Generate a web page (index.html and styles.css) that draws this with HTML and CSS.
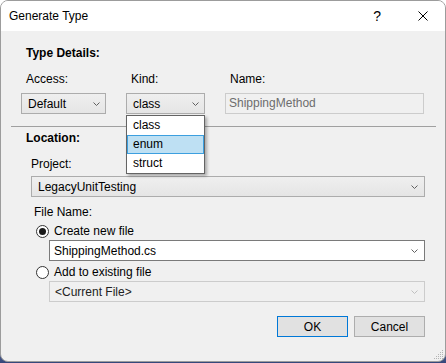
FILE: index.html
```html
<!DOCTYPE html>
<html lang="en">
<head>
    <meta charset="UTF-8">
    <title>Generate Type</title>
    <link rel="stylesheet" href="styles.css">
</head>
<body>
    <div class="window">
        <div class="titlebar">
            <span class="title">Generate Type</span>
            <span class="help">?</span>
            <svg class="close" width="10" height="10" viewBox="0 0 10 10">
                <path d="M0.5 0.5 L9.5 9.5 M9.5 0.5 L0.5 9.5" stroke="#000" stroke-width="1" fill="none"/>
            </svg>
        </div>

        <div class="content">
            <div class="group-title">Type Details:</div>
            <div class="fields">
                <div class="field">
                    <div class="label">Access:</div>
                    <div class="combo">
                        <span>Default</span>
                        <svg class="chev" width="7" height="4" viewBox="0 0 7 4"><path d="M0.5 0.5 L3.5 3.5 L6.5 0.5" stroke="#606060" fill="none"/></svg>
                    </div>
                </div>
                <div class="field kind">
                    <div class="label">Kind:</div>
                    <div class="combo">
                        <span>class</span>
                        <svg class="chev" width="7" height="4" viewBox="0 0 7 4"><path d="M0.5 0.5 L3.5 3.5 L6.5 0.5" stroke="#606060" fill="none"/></svg>
                    </div>
                    <ul class="dropdown">
                        <li>class</li>
                        <li class="selected">enum</li>
                        <li>struct</li>
                    </ul>
                </div>
                <div class="field">
                    <div class="label">Name:</div>
                    <div class="textbox">ShippingMethod</div>
                </div>
            </div>

            <div class="separator"></div>

            <div class="group-title">Location:</div>
            <div class="location">
                <div class="label plain">Project:</div>
                <div class="combo wide">
                    <span>LegacyUnitTesting</span>
                    <svg class="chev" width="7" height="4" viewBox="0 0 7 4"><path d="M0.5 0.5 L3.5 3.5 L6.5 0.5" stroke="#606060" fill="none"/></svg>
                </div>

                <div class="label file-label">File Name:</div>
                <div class="radio-row">
                    <span class="radio checked"></span>
                    <span>Create new file</span>
                </div>
                <div class="combo edit">
                    <span>ShippingMethod.cs</span>
                    <svg class="chev" width="7" height="4" viewBox="0 0 7 4"><path d="M0.5 0.5 L3.5 3.5 L6.5 0.5" stroke="#606060" fill="none"/></svg>
                </div>
                <div class="radio-row second">
                    <span class="radio"></span>
                    <span>Add to existing file</span>
                </div>
                <div class="combo edit disabled">
                    <span>&lt;Current File&gt;</span>
                    <svg class="chev" width="7" height="4" viewBox="0 0 7 4"><path d="M0.5 0.5 L3.5 3.5 L6.5 0.5" stroke="#c0c0c0" fill="none"/></svg>
                </div>
            </div>

            <div class="buttons">
                <button class="btn default">OK</button>
                <button class="btn">Cancel</button>
            </div>
        </div>

        <svg class="grip" width="11" height="11" viewBox="0 0 11 11">
            <g fill="#b4b4b4">
                <rect x="9" y="1" width="1" height="1"/>
                <rect x="7" y="3" width="1" height="1"/><rect x="9" y="3" width="1" height="1"/>
                <rect x="5" y="5" width="1" height="1"/><rect x="7" y="5" width="1" height="1"/><rect x="9" y="5" width="1" height="1"/>
                <rect x="3" y="7" width="1" height="1"/><rect x="5" y="7" width="1" height="1"/><rect x="7" y="7" width="1" height="1"/><rect x="9" y="7" width="1" height="1"/>
                <rect x="1" y="9" width="1" height="1"/><rect x="3" y="9" width="1" height="1"/><rect x="5" y="9" width="1" height="1"/><rect x="7" y="9" width="1" height="1"/><rect x="9" y="9" width="1" height="1"/>
            </g>
        </svg>
    </div>
</body>
</html>
```

FILE: styles.css
```css
body {
    margin: 0;
    font-family: "Liberation Sans", Arial, sans-serif;
    font-size: 12px;
    color: #000;
    background: linear-gradient(#ffffff 0, #ffffff 300px, #34467a 363px);
    height: 363px;
    overflow: hidden;
}
.window {
    position: relative;
    width: 444px;
    height: 360px;
    border: 1px solid #9c9c9c;
    border-radius: 8px;
    background: #f0f0f0;
    overflow: hidden;
}
.titlebar {
    height: 30px;
    background: #fff;
    display: flex;
    align-items: center;
}
.title {
    margin-left: 8px;
    line-height: 16px;
}
.help {
    margin-left: auto;
    margin-right: 37px;
    font-size: 14px;
}
.close {
    margin-right: 17px;
}
.content {
    padding: 14px 20px 0 20px;
}
.group-title {
    font-weight: bold;
    line-height: 16px;
    margin: 0 0 10px 5px;
}
.fields {
    display: grid;
    grid-template-columns: 85px 79px 199px;
    column-gap: 20px;
}
.field {
    position: relative;
}
.label {
    line-height: 16px;
    margin: 0 0 6px 5px;
}
.combo {
    box-sizing: border-box;
    height: 21px;
    border: 1px solid #acacac;
    background: linear-gradient(#efefef, #e5e5e5);
    display: flex;
    align-items: center;
    padding: 0 5px 0 6px;
}
.combo span {
    flex: 1;
    line-height: 16px;
}
.chev {
    display: block;
}
.textbox {
    box-sizing: border-box;
    height: 21px;
    border: 1px solid #cccccc;
    background: #f0f0f0;
    color: #6d6d6d;
    padding: 0 3px;
    line-height: 19px;
}
.dropdown {
    position: absolute;
    top: 44px;
    left: 0;
    width: 79px;
    box-sizing: border-box;
    margin: 0;
    padding: 0;
    list-style: none;
    background: #fff;
    border: 1px solid #646464;
    box-shadow: 2px 2px 3px rgba(0, 0, 0, 0.3);
    z-index: 2;
}
.dropdown li {
    height: 19px;
    line-height: 19px;
    padding-left: 6px;
}
.dropdown li.selected {
    background: #bee0f3;
    outline: 1px solid #3c9fdf;
    outline-offset: -1px;
}
.separator {
    height: 1px;
    background: #a0a0a0;
    margin: 12px -11px 3px -10px;
}
.location {
    padding-left: 10px;
}
.label.plain {
    margin: 0 0 4px 0;
}
.combo.wide {
    padding-left: 6px;
    padding-right: 6px;
}
.label.file-label {
    margin: 7px 0 3px 3px;
}
.radio-row {
    display: flex;
    align-items: center;
    line-height: 16px;
    margin-left: 5px;
    margin-bottom: 1px;
}
.radio-row.second {
    margin-top: 3px;
}
.radio {
    box-sizing: border-box;
    width: 13px;
    height: 13px;
    border: 1px solid #333;
    border-radius: 50%;
    background: #fff;
    margin-right: 5px;
    display: flex;
    align-items: center;
    justify-content: center;
}
.radio.checked::after {
    content: "";
    width: 7px;
    height: 7px;
    border-radius: 50%;
    background: #1a1a1a;
}
.combo.edit {
    margin-left: 18px;
    background: #fff;
    border-color: #7a7a7a;
    padding-left: 4px;
    padding-right: 6px;
}
.combo.edit.disabled {
    background: #f0f0f0;
    border-color: #cccccc;
    padding-left: 5px;
    color: #222;
}
.buttons {
    display: flex;
    justify-content: flex-end;
    gap: 6px;
    margin-top: 14px;
}
.btn {
    width: 71px;
    height: 21px;
    box-sizing: border-box;
    border: 1px solid #adadad;
    background: #e1e1e1;
    font-family: inherit;
    font-size: 12px;
    color: #000;
    padding: 0;
}
.btn.default {
    border-color: #0078d7;
}
.grip {
    position: absolute;
    right: 1px;
    bottom: 1px;
}
```
